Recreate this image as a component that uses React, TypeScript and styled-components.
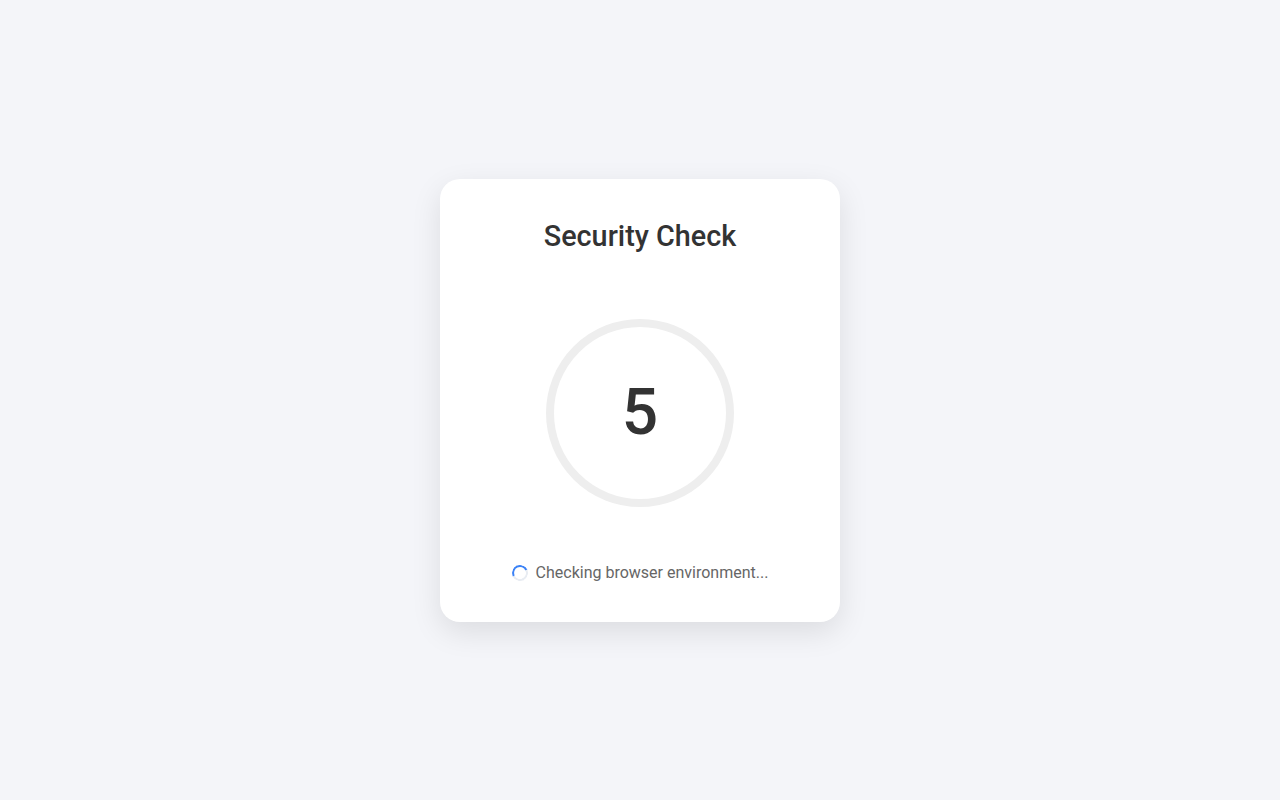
import React from 'react';
import styled, { createGlobalStyle } from 'styled-components';

const GlobalStyle = createGlobalStyle`
  html, body {
    margin: 0;
    padding: 0;
    height: 100%;
  }
  body {
    background: #f4f5f9;
    font-family: Roboto, "Liberation Sans", sans-serif;
  }
  #root {
    height: 100%;
  }
`;

const Page = styled.div`
  min-height: 800px;
  display: flex;
  align-items: center;
  justify-content: center;
`;

const Card = styled.div`
  width: 400px;
  box-sizing: border-box;
  padding: 40px 40px 37px;
  background: #ffffff;
  border-radius: 20px;
  box-shadow: 0 10px 30px rgba(0, 0, 0, 0.1);
  display: flex;
  flex-direction: column;
  align-items: center;
`;

const Title = styled.h1`
  margin: 0 0 66px;
  font-size: 28.8px;
  line-height: 34px;
  font-weight: 500;
  color: #333333;
`;

const Countdown = styled.div`
  width: 188px;
  height: 188px;
  box-sizing: border-box;
  border: 8px solid #eeeeee;
  border-radius: 50%;
  display: flex;
  align-items: center;
  justify-content: center;
  font-size: 64px;
  font-weight: 500;
  color: #333333;
  margin-bottom: 54px;
`;

const Status = styled.div`
  display: flex;
  align-items: center;
  gap: 8px;
  font-size: 16px;
  line-height: 24px;
  color: #666666;
`;

const Spinner = styled.span`
  width: 16px;
  height: 16px;
  box-sizing: border-box;
  border: 2px solid #e8ecf2;
  border-top-color: #3b82f6;
  border-left-color: #3b82f6;
  border-radius: 50%;
  transform: rotate(20deg);
`;

export default function App() {
  return (
    <>
      <GlobalStyle />
      <Page>
        <Card>
          <Title>Security Check</Title>
          <Countdown>5</Countdown>
          <Status>
            <Spinner />
            Checking browser environment...
          </Status>
        </Card>
      </Page>
    </>
  );
}
